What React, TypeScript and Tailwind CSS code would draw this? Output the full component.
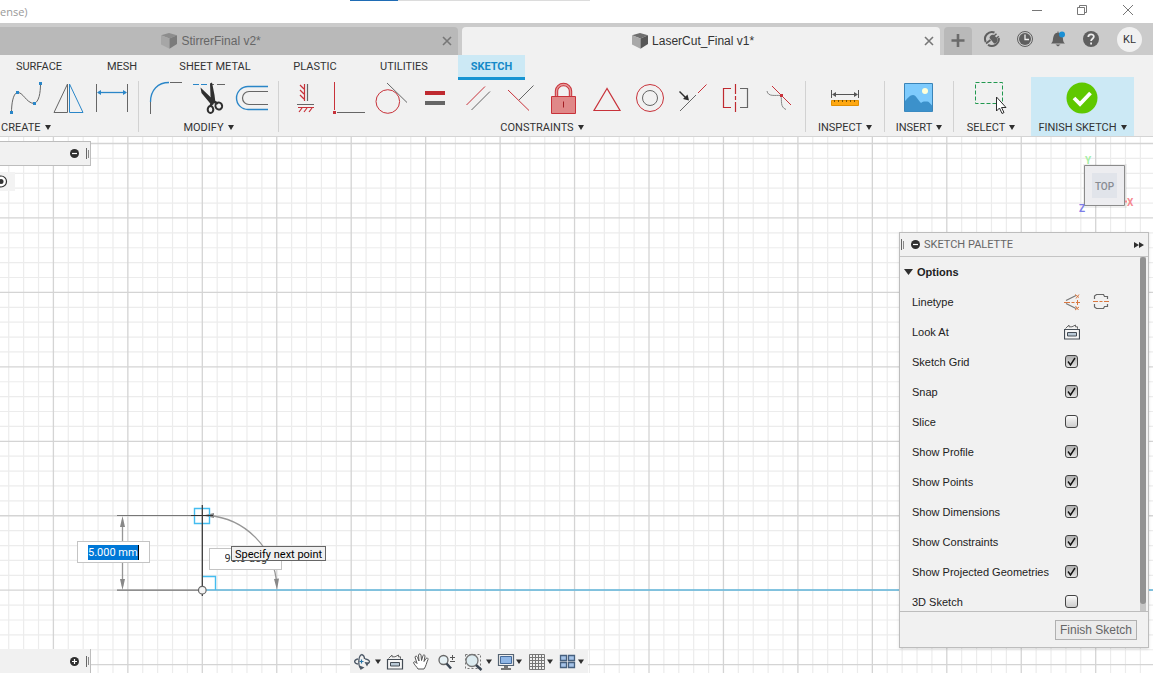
import type { ReactNode } from "react";

const RED = "#c8323a";
const BLUE = "#2a86c8";
const GRAY = "#666666";
const DARK = "#2f2f2f";

type ArtProps = { x: number; y: number; w: number; h: number; children: ReactNode };

/* A drawing whose shapes are given in the coordinates of the whole icon sheet. */
function Art({ x, y, w, h, children }: ArtProps) {
  return (
    <svg width={w} height={h} viewBox={`${x} ${y} ${w} ${h}`} fill="none" className="block shrink-0" aria-hidden="true">
      {children}
    </svg>
  );
}

function Caret() {
  return (
    <svg width="6" height="5" viewBox="0 0 6 5" className="mb-px shrink-0" aria-hidden="true">
      <path d="M0 0h6L3 5z" fill={DARK} />
    </svg>
  );
}

function Cube({ dim }: { dim?: boolean }) {
  return (
    <svg width="16" height="16" viewBox="0 0 16 16" className="shrink-0" aria-hidden="true">
      <path d="M0 2.2 8 0l8 2.2L8.500 5.500z" fill={dim ? "#8d8d8d" : "#6f6f6f"} />
      <path d="M0 2.200 8.500 5.500V15.800L0 11.500z" fill={dim ? "#a6a6a6" : "#a9a9a9"} />
      <path d="M16 2.200 8.500 5.500V15.800L16 11z" fill={dim ? "#7b7b7b" : "#575757"} />
    </svg>
  );
}

function Cross() {
  return (
    <svg width="10" height="10" viewBox="0 0 10 10" aria-hidden="true">
      <path d="M1 1l8 8M9 1L1 9" stroke="#777" strokeWidth="1.6" />
    </svg>
  );
}

const createArt = [
  <>
    <path d="M11.500 112.500C11.500 104 13 94 17 92.500C23 91.500 26 103 34 103.500C39 102 40.500 93 40.500 83.500" stroke={GRAY} />
    <path d="M10 111h3v3h-3zM16 91h3v3h-3zM33 102h3v3h-3zM39 82h3v3h-3z" fill={BLUE} />
  </>,
  <>
    <path d="M54 112.500L67.500 84V112.500z" stroke={GRAY} />
    <path d="M83 112.500L69.500 84V112.500z" stroke={BLUE} />
  </>,
  <>
    <path d="M96.500 84v28M127.500 84v28" stroke={GRAY} />
    <path d="M98 92.500h28" stroke={BLUE} strokeWidth="1.300" />
    <path d="M97 92.500l4-2.500v5zM127 92.500l-4-2.500v5z" fill={BLUE} />
  </>,
];

const modifyArt = [
  <>
    <path d="M150.500 102C150.500 90 158 82.500 169 82.500" stroke={BLUE} strokeWidth="1.300" />
    <path d="M150.500 102v12M170 82.500h12" stroke={GRAY} />
  </>,
  <>
    <path d="M193 84.500h6M201 84.500h6" stroke={BLUE} />
    <path d="M211 84.500h3M217 84.500h8" stroke={GRAY} />
    <path d="M200.500 87.500l12 11.500 1 5.500-2 .5-10-12zM210 83.500l2-1 2.500 12.500 1 8-3 1-2-8z" fill={DARK} />
    <path d="M213 101l5 2.500M212.500 102l-2 4" stroke={DARK} strokeWidth="2.500" />
    <ellipse cx="218.800" cy="106" rx="3.300" ry="3.500" stroke={DARK} strokeWidth="2" transform="rotate(-30 218.800 106)" />
    <ellipse cx="210.500" cy="109.500" rx="2.800" ry="3.500" stroke={DARK} strokeWidth="2" />
  </>,
  <>
    <path d="M268 86.500H248a11.500 11.500 0 0 0 0 23H268" stroke={BLUE} strokeWidth="1.400" />
    <path d="M268 91.500H249a6.500 6.500 0 0 0 0 13H268" stroke={GRAY} strokeWidth="1.200" />
  </>,
];

const constraintArt = [
  <>
    <path d="M304.500 84v17M300 85l4 4M300 90l4 4M300 95l4 4M298 107.500h16M302 108l-3 4M307 108l-3 4M312 108l-3 4" stroke={RED} strokeWidth="1.200" />
    <path d="M307.500 84v17M297 104.500h17" stroke={GRAY} strokeWidth="1.200" />
  </>,
  <>
    <path d="M334.500 82v28" stroke={RED} />
    <path d="M333 111h3v3h-3z" fill={RED} />
    <path d="M337 112.500h28" stroke={GRAY} />
  </>,
  <>
    <circle cx="387.800" cy="101.500" r="11.800" stroke={RED} />
    <path d="M387 83l20 19.500" stroke={GRAY} />
  </>,
  <>
    <path d="M425 91h20v4h-20z" fill="#bf2a30" />
    <path d="M425 101h20v4h-20z" fill={GRAY} />
  </>,
  <>
    <path d="M466.500 105L485 86.500" stroke={RED} />
    <path d="M471.500 110L490 91.500" stroke={GRAY} />
  </>,
  <>
    <path d="M508 90l21 20.500" stroke={RED} />
    <path d="M519 100l14.500-14.500" stroke={GRAY} />
  </>,
  <>
    <path d="M556.500 96v-5a7 6.500 0 0 1 14 0v5" stroke={RED} strokeWidth="3.400" />
    <path d="M556.500 96v-5a7 6.500 0 0 1 14 0v5" stroke="#e69b9b" strokeWidth="1.400" />
    <path d="M551.500 96.500h24v17h-24z" fill="#e08888" stroke={RED} />
    <path d="M563.500 101.500v6" stroke="#a11d22" />
  </>,
  <path d="M607 88.500L594 110.500H620z" stroke={RED} strokeWidth="1.200" />,
  <>
    <circle cx="650" cy="98" r="13.500" stroke={RED} />
    <circle cx="650" cy="98" r="7.500" stroke={GRAY} />
  </>,
  <>
    <path d="M680 111l16-16" stroke={GRAY} />
    <path d="M698 93l8.500-8.500" stroke={RED} />
    <path d="M679.500 91.500l6 6" stroke={DARK} strokeWidth="1.400" />
    <path d="M689 100.500l-1.500-6-4.500 4.500z" fill={DARK} />
  </>,
  <>
    <path d="M731 88.500h-7.500v19h7.500M735.500 84v10M735.500 96v4M735.500 102v10" stroke="#bf2a30" strokeWidth="1.200" />
    <path d="M740 88.500h7.500v19H740" stroke={GRAY} strokeWidth="1.200" />
  </>,
  <>
    <path d="M767 91C768 97 775 95 781 95.500C782 101 780 107 786 109.500" stroke="#888" />
    <path d="M772 86l19 19" stroke={RED} />
    <path d="M780 94h3v3h-3z" fill={RED} />
  </>,
];

const inspectArt = (
  <>
    <path d="M831.500 90v8M858.500 90v8M833 94.500h24" stroke="#555" />
    <path d="M832 94.500l4-2.500v5zM858 94.500l-4-2.500v5z" fill="#555" />
    <path d="M831.500 100.500h27v5h-27z" fill="#ffa811" stroke="#e39000" />
    <path d="M834.500 100v2M838.500 100v2M842.500 100v2M846.500 100v2M850.500 100v2M854.500 100v2" stroke="#7a5200" />
  </>
);

const insertArt = (
  <>
    <path d="M904.500 83.500h28v28h-28z" fill="#7ecbfd" stroke="#3a84b8" />
    <path d="M905 101c3-3 5-6 8-6s5 5 8 8c2-2 4-1.500 6-1.500s3 2 5 4v6h-27z" fill="#3c91cb" />
    <circle cx="925" cy="91" r="3" fill="#ffffd8" />
  </>
);

const selectArt = (
  <>
    <path d="M975.500 82.500h27v21h-27z" stroke="#21984f" strokeDasharray="4 2" />
    <path d="M996.500 97v14l3-3 2.500 5.500 2-1-2.500-5h4.500z" fill="#fff" stroke={DARK} />
  </>
);

function LabelText({ children }: { children: ReactNode }) {
  return (
    <span className="flex h-5 items-center gap-1 whitespace-nowrap pt-1 font-['Roboto',sans-serif] text-[11px] leading-4 text-[#333]">
      {children}
      <Caret />
    </span>
  );
}

type GroupProps = { name: string; className: string; labelClass?: string; start: number; arts: ReactNode[]; tools: string[] };

function Group({ name, className, labelClass = "self-center", start, arts, tools }: GroupProps) {
  return (
    <section className={`flex flex-col pt-[3px] ${className}`} aria-label={name}>
      <div className={arts.length === 3 ? "flex pl-[5px]" : "flex justify-center"}>
        {arts.map((art, i) => (
          <button key={tools[i]} type="button" aria-label={tools[i]}>
            <Art x={start + i * 43} y={80} w={43} h={36}>{art}</Art>
          </button>
        ))}
      </div>
      <button type="button" className={labelClass}>
        <LabelText>{name}</LabelText>
      </button>
    </section>
  );
}

function Divider() {
  return <div className="mt-1 h-[51px] w-px shrink-0 bg-[#d2d2d2]" />;
}

function RoundSign({ plus }: { plus?: boolean }) {
  return (
    <svg width="9" height="9" viewBox="0 0 9 9" className="shrink-0" aria-hidden="true">
      <circle cx="4.500" cy="4.500" r="4.500" fill={DARK} />
      <path d={plus ? "M2 4.500h5M4.500 2v5" : "M2 4.500h5"} stroke="#fff" strokeWidth="1.200" />
    </svg>
  );
}

function Grip() {
  return (
    <span className="flex items-center gap-px">
      <span className="h-[11px] w-px bg-[#666]" />
      <span className="h-2 w-px bg-[#888]" />
    </span>
  );
}

function GridLines() {
  const step = 14.89;
  const xs = Array.from({ length: 190 }, (_, i) => i - 14);
  const ys = Array.from({ length: 90 }, (_, i) => i - 30);
  return (
    <g>
      {[false, true].map((major) => (
        <g key={String(major)} stroke={major ? "#d4d4d4" : "#ececec"} strokeWidth={major ? 1.3 : 1.2}>
          {xs.filter((i) => (i % 5 === 0) === major).map((i) => (
            <path key={`x${i}`} d={`M${202.3 + i * step} 0V1600`} />
          ))}
          {ys.filter((i) => (i % 5 === 0) === major).map((i) => (
            <path key={`y${i}`} d={`M0 ${590.2 + i * step}H2900`} />
          ))}
        </g>
      ))}
    </g>
  );
}

function SketchCanvas() {
  return (
    <svg className="absolute inset-0 h-full w-full" fill="none" aria-label="Sketch">
      <g transform="translate(0 -137)">
        <GridLines />
        <path d="M202 590H2900" stroke="#62b7dd" strokeWidth="1.600" />
        <path d="M117 515.500h85M117 590.200h85" stroke="#777" strokeWidth="1.200" />
        <path d="M122.500 520v66M208 515.500A74.500 74.500 0 0 1 276.800 585" stroke="#969696" strokeWidth="1.300" />
        <path d="M122.500 516l-2.500 11h5zM122.500 590l-2.500-11h5zM277 590l-3-11 5-.5zM203 515.500l11-2.500v5z" fill="#888" />
        <path d="M202.500 576.500h13v13.500M194.500 508.500h15v15h-15z" stroke="#45bdf0" strokeWidth="1.400" />
        <path d="M202.300 505v91M191 515.500h22" stroke="#333" strokeWidth="1.200" />
        <circle cx="202.300" cy="590.200" r="3.800" fill="#f4f4f4" stroke="#666" strokeWidth="1.200" />
      </g>
    </svg>
  );
}

function LookAt({ x, y }: { x: number; y: number }) {
  return (
    <g transform={`translate(${x} ${y})`}>
      <path d="M.5 5.500h15v9.500H.5z" stroke="#444c55" strokeWidth="1.200" fill="#f6f6f6" />
      <path d="M3.500 8.500h9v3.500h-9z" stroke="#444c55" fill="#b9c9d6" />
      <path d="M1.500 4.500L5 1v1.800h3L11.500 1v1.800h2v2" stroke="#666" />
    </g>
  );
}

function MenuCaret({ x }: { x: number }) {
  return <path d={`M${x - 3} 659.500h6l-3 4.500z`} fill={DARK} />;
}

const navTools: { name: string; x: number; w: number; art: ReactNode }[] = [
  {
    name: "Orbit", x: 350, w: 34,
    art: (
      <>
        <path d="M361.500 654.500c-3.500 2-3.500 12-.5 14M361.500 654.500c2 .5 3 2 3 4.500M358 658.800c-4.500 1.200-4.500 4 0 5.400M365 658.800c6 1.200 5.500 4 1.500 5.200" stroke="#4c5866" strokeWidth="1.300" />
        <path d="M364.500 667.500l-4 2.500-1-4.500zM364.500 662l2.500 4.500 2-4z" fill="#4c5866" />
        <path d="M361.500 659.500v4M359.500 661.500h4" stroke="#2775a8" strokeWidth="1.200" />
        <MenuCaret x={378} />
      </>
    ),
  },
  { name: "Look At", x: 384, w: 24, art: <LookAt x={387} y={654} /> },
  {
    name: "Pan", x: 408, w: 26,
    art: (
      <path
        d="M418 669c-1-2-4-4.500-4.500-6.500.5-1.500 2.500-.5 3.500 1l-2-6.500c.5-1.500 2-1 2.500.5l1.500 3.500-.5-6c.5-1.500 2-1.500 2.500 0l.5 5.500 1.500-5c.8-1 2-.5 2 .5l-1 5.500 2-3c1-1 2.500-.2 2 1-1.500 3-2 7-4 9.500z"
        fill="#fff" stroke="#555" strokeWidth="1"
      />
    ),
  },
  {
    name: "Zoom", x: 434, w: 26,
    art: (
      <>
        <circle cx="443.500" cy="660" r="4.500" fill="#e6f1f5" stroke="#666" strokeWidth="1.300" />
        <path d="M446.500 663.500l4.500 5" stroke="#3b4754" strokeWidth="2.600" />
        <path d="M450 657.500h5M452.500 655v5M450 661.500h5" stroke="#555" />
      </>
    ),
  },
  {
    name: "Zoom Window", x: 460, w: 34,
    art: (
      <>
        <path d="M465.500 654.500h15v14h-15z" stroke="#777" strokeDasharray="2 2" />
        <circle cx="472" cy="660.500" r="6" fill="#dcebf0" stroke="#777" strokeWidth="1.300" />
        <path d="M476 665l5.500 5" stroke="#3b4754" strokeWidth="2.400" />
        <MenuCaret x={489} />
      </>
    ),
  },
  {
    name: "Display Settings", x: 494, w: 31,
    art: (
      <>
        <path d="M498.500 654.500h15v11h-15z" fill="#eee" stroke="#566473" strokeWidth="1.200" />
        <path d="M500.500 656.500h11v7h-11z" fill="#8fb6e6" stroke="#456b9c" />
        <path d="M504 666h4v2h-4zM501 668h10v2h-10z" fill="#777" />
        <MenuCaret x={519} />
      </>
    ),
  },
  {
    name: "Grid and Snaps", x: 525, w: 31,
    art: (
      <>
        <path d="M529.500 654.500h15v15h-15zM532.500 654v15M535.500 654v15M538.500 654v15M541.500 654v15M529 657.500h15M529 660.500h15M529 663.500h15M529 666.500h15" stroke="#777" />
        <MenuCaret x={550} />
      </>
    ),
  },
  {
    name: "Viewports", x: 556, w: 32,
    art: (
      <>
        <path d="M560.500 655.500h6v5h-6zM568.500 655.500h6v5h-6zM560.500 662.500h6v5h-6zM568.500 662.500h6v5h-6z" fill="#a5c3e8" stroke="#46607f" strokeWidth="1.300" />
        <MenuCaret x={581} />
      </>
    ),
  },
];

const options = [
  { name: "Sketch Grid", on: true },
  { name: "Snap", on: true },
  { name: "Slice", on: false },
  { name: "Show Profile", on: true },
  { name: "Show Points", on: true },
  { name: "Show Dimensions", on: true },
  { name: "Show Constraints", on: true },
  { name: "Show Projected Geometries", on: true },
  { name: "3D Sketch", on: false },
];

function SketchPalette() {
  return (
    <aside className="absolute right-1 top-[95px] w-[250px] border border-[#bdbdbd] bg-[#f1f1f1] text-[11px] text-[#222] shadow-sm">
      <header className="flex h-6 items-center border-b border-[#c4c4c4] pl-px pr-1">
        <Grip />
        <button type="button" aria-label="Collapse" className="ml-[7px]"><RoundSign /></button>
        <h2 className="ml-1 flex-1 pt-0.5 font-['Roboto',sans-serif] text-[11px] text-[#666]">SKETCH PALETTE</h2>
        <button type="button" aria-label="Dock">
          <svg width="10" height="6" viewBox="0 0 10 6"><path d="M0 0l5 3-5 3zM5 0l5 3-5 3z" fill={DARK} /></svg>
        </button>
      </header>
      <div className="flex h-[354px] overflow-hidden">
        <div className="flex-1">
          <h3 className="flex h-[30px] items-center gap-1 pl-1 font-bold">
            <svg width="9" height="6" viewBox="0 0 9 6"><path d="M0 0h9L4.500 6z" fill={DARK} /></svg>
            Options
          </h3>
          <div className="flex h-[30px] items-center pl-3">
            <span className="w-[151px]">Linetype</span>
            <button type="button" aria-label="Construction">
              <Art x={1063} y={293} w={18} h={18}>
                <path d="M1066 300.500l10-5M1066 303.500l10 5" stroke="#777" strokeWidth="1.200" />
                <path d="M1064 302.500h6M1071.500 302.500h3M1076 302.500h4M1075 294.500l4 3M1079 294.500l-3 4M1075 310l4-3M1075.500 306l3 4M1077.500 300v5" stroke="#d9773f" />
              </Art>
            </button>
            <button type="button" aria-label="Centerline" className="ml-3">
              <Art x={1093} y={293} w={16} h={18}>
                <path d="M1094.500 299v-3l2-1.500h7l1 2h3v2.500M1094.500 304v3l2 1.500h7l1-2h3v-2.500" stroke="#666" strokeWidth="1.200" />
                <path d="M1093 301.500h5M1099.500 301.500h3M1104 301.500h5" stroke="#d9773f" />
              </Art>
            </button>
          </div>
          <div className="flex h-[30px] items-center pl-3">
            <span className="w-[152px]">Look At</span>
            <button type="button" aria-label="Look At">
              <Art x={0} y={0} w={16} h={16}><LookAt x={0} y={0} /></Art>
            </button>
          </div>
          {options.map(({ name, on }) => (
            <label key={name} className="flex h-[30px] items-center pl-3">
              <span className="w-[153px]">{name}</span>
              <span className="grid pb-px">
                <input
                  type="checkbox"
                  defaultChecked={on}
                  className="peer col-start-1 row-start-1 h-[13px] w-[13px] appearance-none rounded-[3px] border border-[#444] bg-linear-to-b from-[#fafafa] to-[#cccccc] checked:from-[#b0b0b0] checked:to-[#e2e2e2]"
                />
                <svg width="13" height="13" viewBox="0 0 13 13" fill="none" className="pointer-events-none invisible col-start-1 row-start-1 peer-checked:visible" aria-hidden="true">
                  <path d="M3 6.500l2.500 3.500L10 3" stroke="#111" strokeWidth="1.400" />
                </svg>
              </span>
            </label>
          ))}
        </div>
        <div className="mr-0.5 w-1.5 shrink-0 bg-[#c6c6c6]">
          <div className="h-[347px] rounded-full bg-[#929292]" />
        </div>
      </div>
      <footer className="flex h-9 items-center justify-end border-t border-[#bdbdbd] pr-[11px]">
        <button type="button" className="h-5 border border-[#b0b0b0] bg-[#ebebeb] px-1 text-xs leading-4 text-[#666]">Finish Sketch</button>
      </footer>
    </aside>
  );
}

function ViewCube() {
  return (
    <div className="absolute right-[13px] top-[15px]">
      <svg width="64" height="64" viewBox="1076 152 64 64" fill="none" className="font-['Roboto',sans-serif] font-bold" role="img" aria-label="View cube">
        <path d="M1083 164h44v44h-44z" fill="#000" opacity=".06" />
        <path d="M1084.500 165.500h40v40h-40z" fill="#ededf0" stroke="#8b8b8b" />
        <path d="M1092 173h25v25h-25z" fill="#e1e4ea" />
        <text x="1104.500" y="189.500" fontSize="10" fontWeight="500" textAnchor="middle" fill="#888c92">TOP</text>
        <text x="1085" y="164" fontSize="10" fill="#a5efa5">Y</text>
        <text x="1127" y="206" fontSize="10" fill="#f58a92">X</text>
        <text x="1079" y="212" fontSize="10" fill="#7d7de8">Z</text>
        <path d="M1125 201.500h2" stroke="#f58a92" strokeWidth="2" />
      </svg>
    </div>
  );
}

const ribbonTabs = [
  { name: "SURFACE", style: "w-[78px]" },
  { name: "MESH", style: "w-[88px]" },
  { name: "SHEET METAL", style: "w-[98px]" },
  { name: "PLASTIC", style: "w-[102px]" },
  { name: "UTILITIES", style: "w-[76px]" },
];

export default function App() {
  return (
    <div className="flex min-h-screen flex-col overflow-hidden bg-white font-['Liberation_Sans',sans-serif] text-xs text-[#333]">
      <header className="relative flex h-[23px] items-center justify-between">
        <span className="pt-0.5 font-['Open_Sans',sans-serif] text-[11px] text-[#999]">ense)</span>
        <div className="absolute left-[350px] top-0 flex h-px">
          <span className="w-12 bg-[#1f6cb5]" />
          <span className="w-48 bg-[#dcdcdc]" />
        </div>
        <div className="flex h-full items-start pr-0.5">
          <button type="button" aria-label="Minimize">
            <Art x={1014} y={0} w={46} h={20}><path d="M1032 10.500h10" stroke="#777" /></Art>
          </button>
          <button type="button" aria-label="Restore">
            <Art x={1060} y={0} w={45} h={20}>
              <path d="M1077.500 7.500h7v7h-7zM1079.500 7.500v-2h7v7h-2" stroke="#777" />
            </Art>
          </button>
          <button type="button" aria-label="Close">
            <Art x={1105} y={0} w={46} h={20}><path d="M1123 5l10 10M1133 5l-10 10" stroke="#777" /></Art>
          </button>
        </div>
      </header>

      <nav className="flex h-8 items-end gap-1 bg-[#cbcbcb]" aria-label="Documents">
        <div className="flex h-7 flex-[458] items-center rounded-tr bg-[#b9b9b9] pr-1.5">
          <a href="#stirrer" className="flex flex-1 items-center justify-center gap-1 pr-5 text-[#666]"><Cube dim />StirrerFinal v2*</a>
          <button type="button" aria-label="Close StirrerFinal"><Cross /></button>
        </div>
        <div className="flex h-7 flex-[478] items-center rounded-t bg-[#f1f1f1] pr-1.5">
          <a href="#laser" className="flex flex-1 items-center justify-center gap-1"><Cube />LaserCut_Final v1*</a>
          <button type="button" aria-label="Close LaserCut_Final"><Cross /></button>
        </div>
        <div className="flex h-7 w-[209px] shrink-0 items-start">
          <button type="button" aria-label="New document" className="rounded-t bg-[#b9b9b9]">
            <Art x={944} y={27} w={28} h={28}><path d="M951.500 40.500h13M958 34v13" stroke="#6b6b6b" strokeWidth="2.600" /></Art>
          </button>
          <button type="button" aria-label="Extensions">
            <Art x={972} y={27} w={36} h={26}>
              <path d="M994.500 32.500a7 7 0 0 0-8.800 9.500M988 44.800a7 7 0 0 0 10.800-6.800" stroke="#5f5f5f" strokeWidth="2" />
              <path d="M986 43.500l4.500-3.500" stroke="#5f5f5f" strokeWidth="1.800" />
              <path d="M989.500 38c0-2.500 2.500-4 4.500-3l3.500 4c.5 2.500-1 4.500-3.500 4.500z" fill="#5f5f5f" />
              <path d="M994 36l2.500-2.300M996.300 38.500l2.500-2.300" stroke="#5f5f5f" strokeWidth="1.500" />
            </Art>
          </button>
          <button type="button" aria-label="Job status">
            <Art x={1008} y={27} w={33} h={26}>
              <circle cx="1025" cy="39" r="7.500" stroke="#5f5f5f" />
              <circle cx="1025" cy="39" r="6" fill="#5f5f5f" />
              <path d="M1025 34.500v5h4" stroke="#eee" strokeWidth="1.300" />
            </Art>
          </button>
          <button type="button" aria-label="Notifications">
            <Art x={1041} y={27} w={33} h={26}>
              <path d="M1051 43.500c2.500-2 1.500-4 2.500-7 .5-2.500 2-3.500 4-3.800v-1.200h1v1.200c2 .3 3.500 1.300 4 3.800 1 3 0 5 2.500 7zM1055.500 44.500h5l-2.500 2z" fill="#5f5f5f" />
              <circle cx="1062" cy="34.500" r="3" fill="#1a8fd4" />
            </Art>
          </button>
          <button type="button" aria-label="Help">
            <Art x={1074} y={27} w={34} h={26}>
              <circle cx="1091" cy="39" r="8" fill="#5f5f5f" />
              <path d="M1088.300 37c0-3.500 5.500-3.500 5.500-.3 0 2-2.700 2-2.700 4.300M1091.100 42.500v2" stroke="#eee" strokeWidth="1.800" />
            </Art>
          </button>
          <button type="button" className="ml-[9px] h-[25px] w-[25px] rounded-full bg-[#f1f1f1] pt-0.5 font-['Roboto',sans-serif] text-[11px]">KL</button>
        </div>
      </nav>

      <nav className="z-10 flex h-[22px] items-start bg-[#f1f1f1] font-['Roboto',sans-serif] text-[11px]" aria-label="Workspace">
        {ribbonTabs.map(({ name, style }) => (
          <button key={name} type="button" className={`h-[22px] whitespace-nowrap pt-0.5 ${style}`}>{name}</button>
        ))}
        <button type="button" className="ml-4 h-[25px] w-[67px] border-b-[3px] border-[#1694d2] bg-[#cce9f5] pt-0.5 font-bold text-[#1489c8]">SKETCH</button>
      </nav>

      <div className="flex h-[59px] bg-[#f1f1f1] pr-[19px]">
        <Group name="CREATE" className="w-[138px] shrink-0" labelClass="self-start pl-px" start={5} arts={createArt} tools={["Spline", "Mirror", "Dimension"]} />
        <Divider />
        <Group name="MODIFY" className="w-[139px] shrink-0" start={144} arts={modifyArt} tools={["Fillet", "Trim", "Offset"]} />
        <Divider />
        <Group
          name="CONSTRAINTS"
          className="flex-1"
          start={284}
          arts={constraintArt}
          tools={["Horizontal/Vertical", "Coincident", "Tangent", "Equal", "Parallel", "Perpendicular", "Fix", "Polygon", "Concentric", "MidPoint", "Symmetry", "Curvature"]}
        />
        <Divider />
        <Group name="INSPECT" className="w-[78px] shrink-0" start={824} arts={[inspectArt]} tools={["Measure"]} />
        <Divider />
        <Group name="INSERT" className="w-[68px] shrink-0" start={898} arts={[insertArt]} tools={["Insert image"]} />
        <Divider />
        <Group name="SELECT" className="w-[74px] shrink-0" start={970} arts={[selectArt]} tools={["Select"]} />
        <button type="button" className="ml-[3px] flex w-[103px] shrink-0 flex-col items-center bg-[#cce9f5] pt-[3px]">
          <Art x={1061} y={80} w={43} h={36}>
            <circle cx="1082" cy="98" r="15.500" fill="#5fc800" />
            <path d="M1074 98l6 6 10.500-11" stroke="#fff" strokeWidth="3.800" />
          </Art>
          <LabelText>FINISH SKETCH</LabelText>
        </button>
      </div>

      <main className="relative min-h-[536px] flex-1 overflow-hidden border-t border-[#d4d4d4]">
        <SketchCanvas />

        <div className="absolute left-0 top-1 flex h-[25px] w-[91px] items-center justify-end gap-[7px] border border-l-0 border-[#bdbdbd] bg-[#f1f1f1] pr-px">
          <button type="button" aria-label="Collapse browser"><RoundSign /></button>
          <Grip />
        </div>
        <div className="absolute left-0 top-[35px] h-[19px] w-[15px] bg-[#f3f3f3]">
          <Art x={0} y={172} w={15} h={19}>
            <circle cx="1" cy="181.500" r="5.500" fill="#fff" stroke="#333" strokeWidth="1.200" />
            <circle cx="1" cy="181.500" r="2.500" fill="#333" />
          </Art>
        </div>

        <div className="absolute left-[77px] top-[404px] flex h-[22px] w-[73px] items-center justify-center border border-[#c4c4c4] bg-white">
          <input aria-label="Length" defaultValue="5.000 mm" className="h-[15px] w-[51px] border-r border-black bg-[#0078d7] font-['Roboto',sans-serif] text-[11px] text-white outline-none" />
        </div>
        <div className="absolute left-[209px] top-[411px] flex h-[22px] w-[73px] items-center justify-center border border-[#c4c4c4] bg-white">
          <input aria-label="Angle" defaultValue="90.0 deg" className="w-[42px] font-['Roboto',sans-serif] text-[11px] outline-none" />
        </div>
        <div role="tooltip" className="absolute left-[231px] top-[409px] flex h-[15px] items-center whitespace-nowrap border border-[#666] bg-[#f0f0f0] px-[3px] pt-0.5 font-['Roboto',sans-serif] text-[11px] leading-3 text-black">
          Specify next point
        </div>

        <ViewCube />
        <SketchPalette />

        <div className="absolute bottom-0 left-0 flex h-6 w-[91px] items-center justify-end gap-[7px] border-r border-[#bdbdbd] bg-[#f1f1f1] pr-px">
          <button type="button" aria-label="Expand comments"><RoundSign plus /></button>
          <Grip />
        </div>
        <div className="absolute bottom-0 left-[350px] flex h-6 bg-[#f1f1f1]" role="toolbar" aria-label="Navigation">
          {navTools.map(({ name, x, w, art }) => (
            <button key={name} type="button" aria-label={name}>
              <Art x={x} y={649} w={w} h={24}>{art}</Art>
            </button>
          ))}
        </div>
      </main>
    </div>
  );
}
